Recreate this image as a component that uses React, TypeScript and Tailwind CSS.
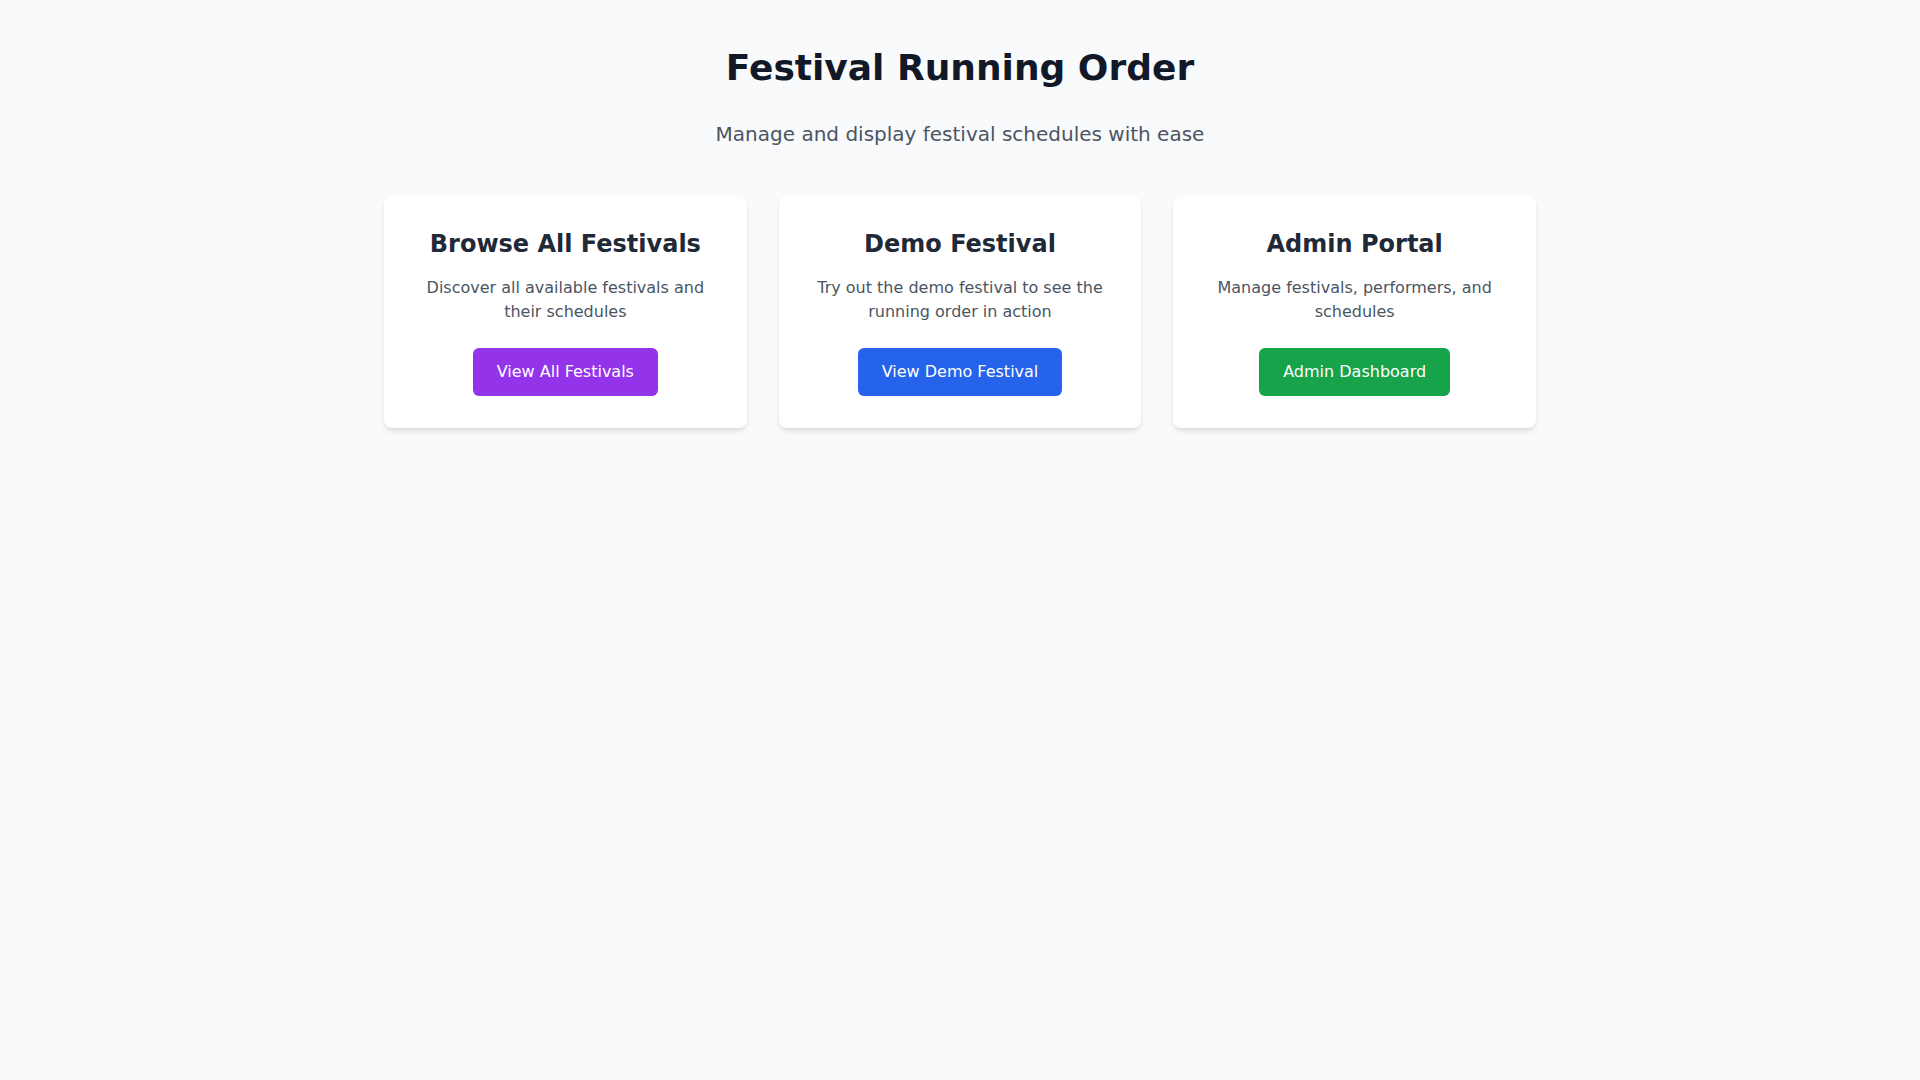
import React from "react";

const cards = [
  {
    title: "Browse All Festivals",
    desc: "Discover all available festivals and their schedules",
    btn: "View All Festivals",
    cls: "bg-[#9333ea]",
  },
  {
    title: "Demo Festival",
    desc: "Try out the demo festival to see the running order in action",
    btn: "View Demo Festival",
    cls: "bg-[#2563eb]",
  },
  {
    title: "Admin Portal",
    desc: "Manage festivals, performers, and schedules",
    btn: "Admin Dashboard",
    cls: "bg-[#16a34a]",
  },
];

export default function App() {
  return (
    <div
      className="min-h-screen bg-[#f9fafb]"
      style={{ fontFamily: '"DejaVu Sans", sans-serif' }}
    >
      <div className="max-w-6xl mx-auto py-12">
        <div className="text-center mb-12">
          <h1 className="text-4xl font-bold text-[#111827] mb-8">Festival Running Order</h1>
          <p className="text-xl text-[#4b5563]">Manage and display festival schedules with ease</p>
        </div>
        <div className="grid grid-cols-3 gap-8">
          {cards.map((c) => (
            <div key={c.title} className="bg-white rounded-lg shadow-md p-8 text-center">
              <h2 className="text-2xl font-bold text-[#1f2937] mb-4">{c.title}</h2>
              <p className="text-base text-[#4b5563] mb-6">{c.desc}</p>
              <button className={`${c.cls} text-white px-6 py-3 rounded-md text-base`}>{c.btn}</button>
            </div>
          ))}
        </div>
      </div>
    </div>
  );
}
